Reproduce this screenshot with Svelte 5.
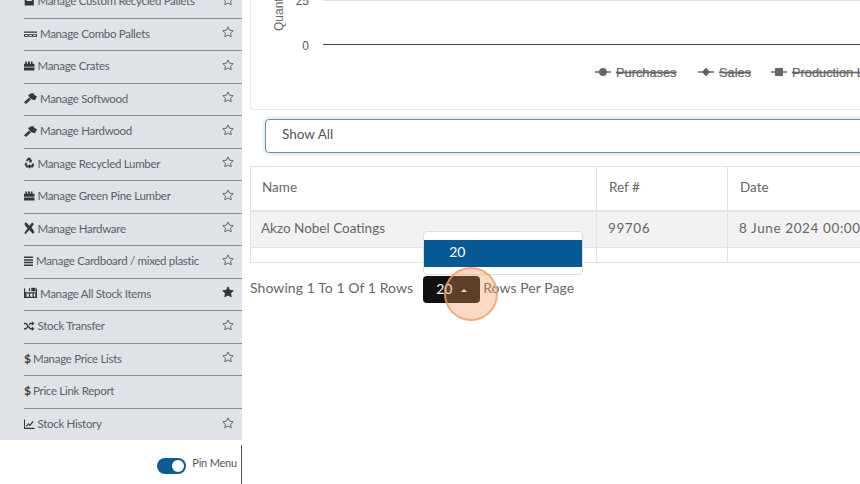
<script>
  // icon paths, all in a 16x16 box
  const icons = {
    blocks: 'M1 0h3v8h8v-3h3v9H1z',
    pallet: 'M0 6h16v1.800H0zM0 9.500h16v3.500H0zM1.500 10.500v1.500h3v-1.500zM6.500 10.500v1.500h3v-1.500zM11.500 10.500v1.500h3v-1.500z',
    crate: 'M2 2h2.500v3H6V2h3v3h1.500V2H13v3h3v4H0V5h2zM0 10h16v4H0z',
    hammer: 'M0 13.500 6 7.500 8.500 10 2.500 16zM5 4 9 1.500 13 2 12 3.500 16 5.500 15.500 7 13.500 11 9 9.500 6.500 7z',
    recycle: 'M6 1h3.500l1.700 3 1.300-.7-1.300 4.200-4-1 1.200-.7L7.200 3.500 5.500 6 3 4.500zM2.500 7 5 8.500 3.700 11H7v3H3.500L1 10zM14 8l1.500 3-2 3H9v2l-3-3.500L9 9v2h3.500l-1-1.500z',
    tools: 'M1 1h3l4 4 4-4h1.500L15 3l-3.500 4 4 5.500v2L13.500 15.500 8 10.500 3 15.500H1v-2L5.500 8.500 1 4z',
    bars: 'M0 2h16v2H0zM0 5.500h16v2H0zM0 9h16v2H0zM0 12.500h16v2H0z',
    store: 'M0 2h1.500v5h13V2H16v12.500H0zM3 8.500v4.500h3V8.500zM7.500 8.500v4.500h3V8.500zM12 8.500v4.500h2V8.500zM6 1.500h1.500v4H6zM9 1h5v4.500H9z',
    shuffle: 'M0 3.500h3.500L10 10.500h2V8.500L16 11.500 12 14.500v-2H9L2.800 5.500H0zM0 10.500h2.800L5 8.300l1.300 1.500L3.500 12.500H0zM9 3.500h3v-2L16 4.500 12 7.500v-2h-2L8.500 7 7.300 5.500z',
    trend: 'M0 2h1.500v11H16v1.500H0zM3 10.500 6.500 6.500l2.500 2L13 4l1.500 1.300-5.300 5.700-2.500-2-2.500 2.800z'
  };

  const star = 'M8 1.200l2.100 4.400 4.800.6-3.500 3.300.9 4.800L8 12l-4.300 2.300.9-4.800L1.100 6.200l4.800-.6z';

  const rows = [
    { label: 'Manage Custom Recycled Pallets', icon: 'blocks' },
    { label: 'Manage Combo Pallets', icon: 'pallet' },
    { label: 'Manage Crates', icon: 'crate' },
    { label: 'Manage Softwood', icon: 'hammer' },
    { label: 'Manage Hardwood', icon: 'hammer' },
    { label: 'Manage Recycled Lumber', icon: 'recycle' },
    { label: 'Manage Green Pine Lumber', icon: 'crate' },
    { label: 'Manage Hardware', icon: 'tools' },
    { label: 'Manage Cardboard / mixed plastic', icon: 'bars' },
    { label: 'Manage All Stock Items', icon: 'store', starred: true },
    { label: 'Stock Transfer', icon: 'shuffle' },
    { label: 'Manage Price Lists', dollar: true },
    { label: 'Price Link Report', dollar: true, nostar: true },
    { label: 'Stock History', icon: 'trend' }
  ];
</script>

<div class="screen">
  <aside class="sidebar">
    <ul class="menu">
      {#each rows as row}
        <li class="row">
          {#if row.dollar}
            <span class="dollar">$</span>
          {:else}
            <svg class="icon {row.icon}" viewBox="0 0 16 16" preserveAspectRatio="none"><path d={icons[row.icon]} /></svg>
          {/if}
          <span class="label">{row.label}</span>
          {#if !row.nostar}
            <svg class="star" class:on={row.starred} viewBox="0 0 16 16"><path d={star} /></svg>
          {/if}
        </li>
      {/each}
    </ul>
    <div class="pin">
      <span class="toggle"><i></i></span>
      <span class="pin-label">Pin Menu</span>
    </div>
  </aside>

  <main class="content">
    <section class="chart-card">
      <svg width="610" height="110" viewBox="0 0 610 110">
        <line x1="72" y1="0.500" x2="610" y2="0.500" stroke="#e2e2e2" />
        <line x1="72" y1="44.500" x2="610" y2="44.500" stroke="#444" />
        <text class="tick" x="58" y="5" text-anchor="end">25</text>
        <text class="tick" x="58" y="50" text-anchor="end">0</text>
        <text class="axis" transform="translate(32 31) rotate(-90)">Quantity</text>

        <g class="legend">
          <line x1="344" y1="72" x2="360" y2="72" />
          <circle cx="352" cy="72" r="4" />
          <text x="365" y="76.500">Purchases</text>
          <line x1="447" y1="72" x2="463" y2="72" />
          <path d="M455 67.500l4 4.500-4 4.500-4-4.500z" />
          <text x="468" y="76.500">Sales</text>
          <line x1="520" y1="72" x2="536" y2="72" />
          <rect x="524" y="68" width="8" height="8" />
          <text x="541" y="76.500">Production Lumber</text>
        </g>
      </svg>
    </section>

    <div class="select">Show All</div>

    <table class="grid">
      <colgroup>
        <col class="c-name" />
        <col class="c-ref" />
        <col class="c-date" />
      </colgroup>
      <thead>
        <tr><th>Name</th><th>Ref #</th><th>Date</th></tr>
      </thead>
      <tbody>
        <tr class="filled"><td>Akzo Nobel Coatings</td><td class="wide-text">99706</td><td class="wide-text">8 June 2024 00:00</td></tr>
        <tr class="blank"><td></td><td></td><td></td></tr>
      </tbody>
    </table>

    <div class="pager">
      <span class="pager-text">Showing 1 To 1 Of 1 Rows</span>
      <div class="size">
        <div class="size-menu"><div class="size-item">20</div></div>
        <button class="size-btn">20 <b></b></button>
        <span class="click"></span>
      </div>
      <span class="pager-text">Rows Per Page</span>
    </div>
  </main>
</div>

<style>
  :global(body) {
    background: #fff;
  }

  .screen {
    width: 860px;
    height: 484px;
    display: flex;
    overflow: hidden;
    background: #fff;
    font-family: Lato, "Open Sans", sans-serif;
    color: #555;
  }

  .sidebar {
    flex: 0 0 242px;
    min-width: 0;
    display: flex;
    flex-direction: column;
  }

  .menu {
    height: 440px;
    margin: 0;
    padding: 0 0 0 24px;
    list-style: none;
    background: #dfe3e7;
    overflow: hidden;
  }

  .row {
    height: 32.5px;
    box-sizing: border-box;
    padding-bottom: 2px;
    display: flex;
    align-items: center;
    gap: 3px;
    border-bottom: 1px solid #868c91;
    font-size: 11.500px;
    letter-spacing: -0.300px;
    color: #5a6065;
  }

  .row:first-child {
    margin-top: -14px;
  }

  .row:last-child {
    border-bottom: 0;
  }

  .icon {
    width: 10.500px;
    height: 12px;
    fill: #33383c;
    flex: none;
  }

  .icon.pallet,
  .icon.hammer,
  .icon.store {
    width: 13px;
  }

  .icon.bars {
    width: 9px;
  }

  .dollar {
    color: #33383c;
    font-size: 12px;
    font-weight: 700;
    width: 6px;
  }

  .label {
    flex: 1;
    white-space: nowrap;
  }

  .star {
    width: 12px;
    height: 12px;
    margin: 0 8px 2px 0;
    fill: none;
    stroke: #555b60;
    stroke-width: 1.200;
  }

  .star.on {
    fill: #2f3438;
    stroke: #2f3438;
  }

  .pin {
    flex: 1;
    display: flex;
    align-items: center;
    justify-content: flex-end;
    gap: 6px;
    padding-right: 4px;
    border-right: 1px solid #555;
    margin-top: 5px;
    font-size: 11px;
    letter-spacing: -0.200px;
    color: #555;
  }

  .pin-label {
    margin-top: -5px;
  }

  .toggle {
    width: 29px;
    height: 16px;
    margin-top: 3px;
    border-radius: 8px;
    background: #0d5c96;
    display: flex;
    justify-content: flex-end;
    align-items: center;
    padding-right: 2px;
    box-sizing: border-box;
  }

  .toggle i {
    width: 12px;
    height: 12px;
    border-radius: 50%;
    background: #fff;
  }

  .content {
    flex: 1;
    min-width: 0;
    padding-left: 8px;
  }

  .chart-card {
    width: 640px;
    height: 110px;
    box-sizing: border-box;
    border: 1px solid #e6e6e6;
    border-top: 0;
    border-radius: 0 0 0 4px;
  }

  .chart-card svg {
    display: block;
  }

  .tick {
    font: 12px "Liberation Sans", sans-serif;
    fill: #555;
  }

  .axis {
    font: 12px "Liberation Sans", sans-serif;
    fill: #666;
  }

  .legend line {
    stroke: #666;
    stroke-width: 1.500;
  }

  .legend circle,
  .legend path,
  .legend rect {
    fill: #666;
  }

  .legend text {
    font: 12.800px "Liberation Sans", sans-serif;
    fill: #666;
    text-decoration: line-through;
    stroke: #666;
    stroke-width: 0.200;
  }

  .select {
    width: 640px;
    height: 34px;
    box-sizing: border-box;
    margin: 9px 0 13px 15px;
    padding: 0 0 4px 16px;
    display: flex;
    align-items: center;
    border: 1px solid #6f93ad;
    border-radius: 4px;
    box-shadow: 0 0 4px #a9cfe8;
    font-size: 13.500px;
    color: #555;
  }

  .grid {
    width: 700px;
    table-layout: fixed;
    border-collapse: collapse;
    font-size: 13.500px;
    color: #666;
  }

  .c-name { width: 346px; }
  .c-ref { width: 131px; }

  .grid th,
  .grid td {
    border: 1px solid #e2e2e2;
    text-align: left;
    font-weight: 400;
    padding: 0 11px 3px;
  }

  .grid th {
    height: 40px;
    padding-left: 12px;
    border-bottom-width: 2px;
  }

  .grid th:first-child {
    padding-left: 11px;
  }

  .grid td:first-child {
    padding-left: 10px;
  }

  .filled td {
    height: 32px;
    background: #f2f2f2;
  }

  .wide-text {
    letter-spacing: 0.600px;
  }

  .blank td {
    height: 14px;
    padding: 0;
  }

  .pager {
    display: flex;
    align-items: center;
    margin-top: 13px;
    font-size: 14px;
    color: #666;
  }

  .pager-text {
    margin-top: -5px;
    letter-spacing: 0.070px;
  }

  .size {
    position: relative;
    margin: 0 3px 0 10px;
  }

  .size-btn {
    display: block;
    width: 57px;
    height: 27px;
    border: 0;
    border-radius: 4px;
    background: #111;
    color: #fff;
    font: 14px Lato, sans-serif;
    padding: 0 0 3px;
  }

  .size-btn b {
    display: inline-block;
    width: 0;
    height: 0;
    margin: 0 0 2px 5px;
    border: 3px solid transparent;
    border-top: 0;
    border-bottom: 3px solid #fff;
  }

  .size-menu {
    position: absolute;
    left: 0;
    bottom: 28px;
    width: 160px;
    height: 44px;
    box-sizing: border-box;
    padding-top: 8px;
    background: #fff;
    border: 1px solid #ddd;
    border-radius: 4px;
  }

  .size-item {
    height: 27px;
    padding: 0 0 0 25px;
    line-height: 23px;
    background: #055a96;
    color: #fff;
  }

  .click {
    position: absolute;
    left: 21px;
    top: -9px;
    width: 54px;
    height: 54px;
    box-sizing: border-box;
    border-radius: 50%;
    background: rgba(241, 150, 80, 0.35);
    border: 2px solid rgba(240, 160, 100, 0.8);
  }
</style>
